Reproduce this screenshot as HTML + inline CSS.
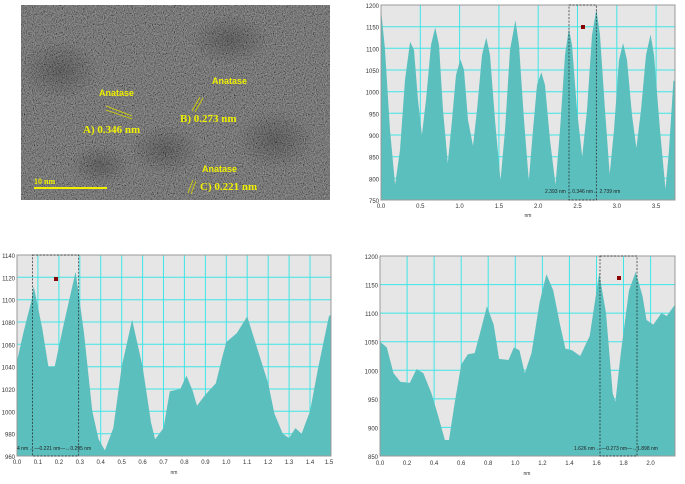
<!DOCTYPE html>
<html><head><meta charset="utf-8"><style>
body{margin:0;background:#fff;width:685px;height:479px;overflow:hidden}
svg text{font-family:"Liberation Sans",sans-serif}
</style></head><body>
<svg width="685" height="479" viewBox="0 0 685 479" xmlns="http://www.w3.org/2000/svg">
<defs>
<filter id="g" x="0" y="0" width="100%" height="100%">
<feTurbulence type="fractalNoise" baseFrequency="0.9" numOctaves="2" seed="5" result="t"/>
<feColorMatrix in="t" type="matrix" values="0.33 0.33 0.33 0 0  0.33 0.33 0.33 0 0  0.33 0.33 0.33 0 0  0 0 0 0 1"/>
<feComponentTransfer><feFuncR type="linear" slope="2.6" intercept="-0.85"/><feFuncG type="linear" slope="2.6" intercept="-0.85"/><feFuncB type="linear" slope="2.6" intercept="-0.85"/></feComponentTransfer>
</filter>
<radialGradient id="d"><stop offset="0" stop-color="#000" stop-opacity="0.22"/><stop offset="1" stop-color="#000" stop-opacity="0"/></radialGradient>
</defs>

<!-- TEM image -->
<rect x="21" y="5" width="309" height="195" fill="#424242"/>
<rect x="21" y="5" width="309" height="195" filter="url(#g)" opacity="0.5"/>
<ellipse cx="60" cy="70" rx="40" ry="30" fill="url(#d)"/>
<ellipse cx="165" cy="150" rx="35" ry="25" fill="url(#d)"/>
<ellipse cx="275" cy="140" rx="40" ry="30" fill="url(#d)"/>
<ellipse cx="230" cy="40" rx="40" ry="25" fill="url(#d)"/>
<ellipse cx="100" cy="165" rx="30" ry="20" fill="url(#d)"/>
<g fill="#f0f000" font-weight="bold">
<text x="99" y="96" font-size="9">Anatase</text>
<text x="212" y="84" font-size="9">Anatase</text>
<text x="202" y="172" font-size="9">Anatase</text>
<text x="83" y="133" font-size="11" style="font-family:'Liberation Serif',serif">A) 0.346 nm</text>
<text x="180" y="122" font-size="11" style="font-family:'Liberation Serif',serif">B) 0.273 nm</text>
<text x="200" y="190" font-size="11" style="font-family:'Liberation Serif',serif">C) 0.221 nm</text>
<text x="34" y="184" font-size="8" style="font-family:'Liberation Serif',serif">10 nm</text>
</g>
<rect x="34" y="187" width="73" height="2" fill="#f0f000"/>
<g stroke="#d8d800" stroke-width="0.8" fill="none">
<path d="M106 106 L132 116 M106 110 L132 119"/>
<path d="M192 111 L200 97 M195 112 L203 98"/>
<path d="M188 193 L193 180 M191 194 L196 181"/>
</g>

<!-- Chart 1 -->
<rect x="381" y="5" width="294" height="195" fill="#e6e6e6"/>
<g stroke="#3ee6e6" stroke-width="1">
<path d="M420.3 5V200M459.6 5V200M498.9 5V200M538.2 5V200M577.5 5V200M616.8 5V200M656.1 5V200"/>
<path d="M381 26.7H675M381 48.3H675M381 70H675M381 91.7H675M381 113.3H675M381 135H675M381 156.7H675M381 178.3H675"/>
</g>
<polygon fill="#5bbfbe" points="381,200 381,9.3 384.9,48.3 390,130 395.1,184.8 400,150 405,80 410.1,41.8 414,50 418,100 421.9,135 426,100 431,45 435.2,27.5 439,45 443,110 447.8,163.2 452,120 456,75 460.4,59.2 464,70 468,120 473,145.8 477,110 482,55 486.3,37.5 490,55 495,120 500.5,180.5 505,130 510,50 515.4,20.2 519,45 524,120 528.8,180.5 533,130 537,85 541.3,72.2 545,85 550,140 555.5,184.8 560,130 565,55 568.9,28.8 572,45 577,110 582.2,156.7 587,110 592,35 596.4,9.3 600,35 605,110 609.7,174 614,130 619,60 623.1,43.1 627,60 632,115 636.4,148 641,110 646,55 650.6,34.5 654,55 660,130 665.5,189.2 669,150 673.4,80.8 675,80.8 675,200"/>
<rect x="381" y="5" width="294" height="195" fill="none" stroke="#999" stroke-width="1"/>
<g stroke="#222" stroke-width="0.7" stroke-dasharray="2,1.5" fill="none"><rect x="569" y="5" width="27.3" height="195"/></g>
<rect x="581" y="25" width="4" height="4" fill="#8b0000"/>
<text x="545" y="193" font-size="5" fill="#222">2.393 nm ↔0.346 nm↔ 2.739 nm</text>
<g font-size="6" fill="#333" text-anchor="end">
<text x="379" y="8">1200</text><text x="379" y="29.7">1150</text><text x="379" y="51.3">1100</text><text x="379" y="73">1050</text><text x="379" y="94.7">1000</text><text x="379" y="116.3">950</text><text x="379" y="138">900</text><text x="379" y="159.7">850</text><text x="379" y="181.3">800</text><text x="379" y="203">750</text>
</g>
<g font-size="6" fill="#333" text-anchor="middle">
<text x="381" y="208">0.0</text><text x="420.3" y="208">0.5</text><text x="459.6" y="208">1.0</text><text x="498.9" y="208">1.5</text><text x="538.2" y="208">2.0</text><text x="577.5" y="208">2.5</text><text x="616.8" y="208">3.0</text><text x="656.1" y="208">3.5</text>
<text x="528" y="217" font-size="5">nm</text>
</g>

<!-- Chart 2 -->
<rect x="17" y="255" width="314" height="201" fill="#e6e6e6"/>
<g stroke="#3ee6e6" stroke-width="1">
<path d="M37.9 255V456M58.9 255V456M79.8 255V456M100.7 255V456M121.7 255V456M142.6 255V456M163.5 255V456M184.4 255V456M205.4 255V456M226.3 255V456M247.2 255V456M268.2 255V456M289.1 255V456M310 255V456"/>
<path d="M17 277.3H331M17 299.7H331M17 322H331M17 344.3H331M17 366.7H331M17 389H331M17 411.3H331M17 433.7H331"/>
</g>
<polygon fill="#5bbfbe" points="17,456 17,361.1 23.3,333.1 31.7,299.6 33.7,286.2 42.1,327.5 48.4,366.6 54.7,366.6 63,327.5 75.6,271.7 84,333.1 92.3,411.3 98.6,439.2 104.9,450.4 113.3,428.1 121.7,366.6 132.1,319.7 142.6,366.6 151,422.5 155.1,439.2 163.5,428.1 169.8,391.2 180.3,389 186.5,375.6 192.8,391.2 197,405.7 205.4,394.6 215.8,383.4 222.1,357.7 226.3,342.1 236.8,333.1 247.2,316.4 257.7,349.9 268.2,383.4 274.4,413.6 282.8,433.7 289.1,438.1 295.4,428.1 301.6,433.7 310,411.3 318.4,366.6 328.9,316.4 331,314.1 331,456"/>
<rect x="17" y="255" width="314" height="201" fill="none" stroke="#999" stroke-width="1"/>
<g stroke="#222" stroke-width="0.7" stroke-dasharray="2,1.5" fill="none"><rect x="32.5" y="255" width="46.2" height="201"/></g>
<rect x="54" y="277" width="4" height="4" fill="#8b0000"/>
<text x="17" y="450" font-size="5" fill="#222">4 nm ↔—0.221 nm—↔0.295 nm</text>
<g font-size="6" fill="#333" text-anchor="end">
<text x="15" y="258">1140</text><text x="15" y="280.3">1120</text><text x="15" y="302.7">1100</text><text x="15" y="325">1080</text><text x="15" y="347.3">1060</text><text x="15" y="369.7">1040</text><text x="15" y="392">1020</text><text x="15" y="414.3">1000</text><text x="15" y="436.7">980</text><text x="15" y="459">960</text>
</g>
<g font-size="6" fill="#333" text-anchor="middle">
<text x="17" y="464">0.0</text><text x="37.9" y="464">0.1</text><text x="58.9" y="464">0.2</text><text x="79.8" y="464">0.3</text><text x="100.7" y="464">0.4</text><text x="121.7" y="464">0.5</text><text x="142.6" y="464">0.6</text><text x="163.5" y="464">0.7</text><text x="184.4" y="464">0.8</text><text x="205.4" y="464">0.9</text><text x="226.3" y="464">1.0</text><text x="247.2" y="464">1.1</text><text x="268.2" y="464">1.2</text><text x="289.1" y="464">1.3</text><text x="310" y="464">1.4</text><text x="329" y="464">1.5</text>
<text x="174" y="474" font-size="5">nm</text>
</g>

<!-- Chart 3 -->
<rect x="380" y="256" width="295" height="200" fill="#e6e6e6"/>
<g stroke="#3ee6e6" stroke-width="1">
<path d="M407.1 256V456M434.1 256V456M461.2 256V456M488.2 256V456M515.3 256V456M542.4 256V456M569.4 256V456M596.5 256V456M623.5 256V456M650.6 256V456"/>
<path d="M380 284.6H675M380 313.1H675M380 341.7H675M380 370.3H675M380 398.9H675M380 427.4H675"/>
</g>
<polygon fill="#5bbfbe" points="380,456 380,341.7 386.8,347.4 393.5,373.1 400.3,381.7 409.8,382.9 416.5,369.1 423.3,373.1 431.4,393.1 438.2,416 444.9,440 449,440 454.4,404.6 461.2,364.6 467.9,354.3 474.7,353.1 481.5,327.4 486.9,306.3 493.7,324.6 499.1,358.9 508.5,360 513.9,347.4 519.4,350.3 524.8,373.1 531.5,353.1 539.7,301.7 546.4,274.3 553.2,290.3 560,324.6 565.4,348.6 572.1,350.3 580.2,356 589.7,336 599.2,273.1 606,313.1 612.7,393.1 615.4,401.7 620.8,353.1 629,290.3 635.7,272 642.5,296 646.5,320 653.3,324.6 661.4,313.1 666.8,316 675,304.6 675,456"/>
<rect x="380" y="256" width="295" height="200" fill="none" stroke="#999" stroke-width="1"/>
<g stroke="#222" stroke-width="0.7" stroke-dasharray="2,1.5" fill="none"><rect x="600" y="256" width="37" height="200"/></g>
<rect x="617" y="276" width="4" height="4" fill="#8b0000"/>
<text x="574" y="450" font-size="5" fill="#222">1.626 nm ↔—0.273 nm—↔1.898 nm</text>
<g font-size="6" fill="#333" text-anchor="end">
<text x="378" y="259">1200</text><text x="378" y="287.6">1150</text><text x="378" y="316.1">1100</text><text x="378" y="344.7">1050</text><text x="378" y="373.3">1000</text><text x="378" y="401.9">950</text><text x="378" y="430.4">900</text><text x="378" y="459">850</text>
</g>
<g font-size="6" fill="#333" text-anchor="middle">
<text x="380" y="465">0.0</text><text x="407.1" y="465">0.2</text><text x="434.1" y="465">0.4</text><text x="461.2" y="465">0.6</text><text x="488.2" y="465">0.8</text><text x="515.3" y="465">1.0</text><text x="542.4" y="465">1.2</text><text x="569.4" y="465">1.4</text><text x="596.5" y="465">1.6</text><text x="623.5" y="465">1.8</text><text x="650.6" y="465">2.0</text>
<text x="527" y="475" font-size="5">nm</text>
</g>
</svg>
</body></html>
